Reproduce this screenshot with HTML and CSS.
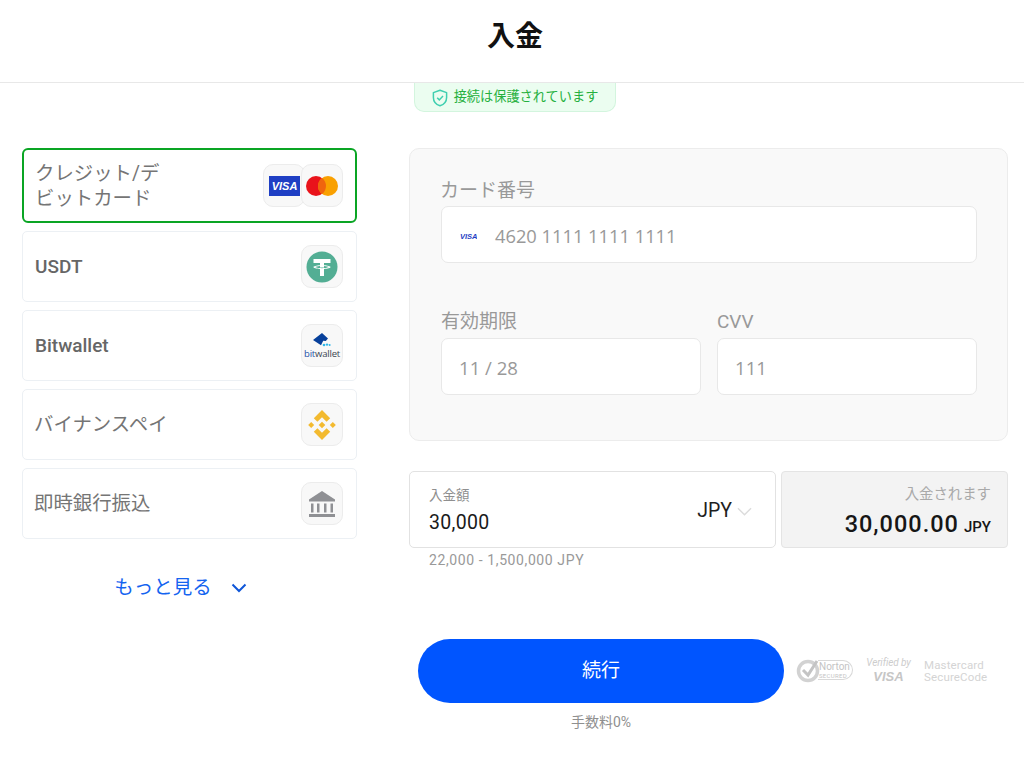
FILE: index.html
```html
<!DOCTYPE html>
<html lang="ja">
<head>
<meta charset="utf-8">
<title>入金</title>
<link rel="stylesheet" href="styles.css">
</head>
<body>
<header class="header"><h1 class="title">入金</h1></header>
<div class="badge-row">
  <div class="badge">
    <svg class="badge-icon" viewBox="0 0 16 18" width="16" height="18"><path d="M8 1.2 14.6 3.6V8.4C14.6 12.4 11.9 15.4 8 16.8 4.1 15.4 1.4 12.4 1.4 8.4V3.6Z" fill="none" stroke="#3fcfb0" stroke-width="1.5" stroke-linejoin="round"/><path d="M5.2 8.8 7.3 10.9 11 7" fill="none" stroke="#3fcfb0" stroke-width="1.5"/></svg>
    <span>接続は保護されています</span>
  </div>
</div>
<main class="main">
  <section class="methods">
    <div class="method method-active">
      <span class="method-name method-wrap">クレジット/デビットカード</span>
      <span class="icons">
        <span class="icon-box icon-overlap">
          <svg viewBox="0 0 31 20" width="31" height="20"><rect width="31" height="20" fill="#1f3fc4"/><text x="15.5" y="14" class="visa-text" text-anchor="middle">VISA</text></svg>
        </span>
        <span class="icon-box">
          <svg viewBox="0 0 32 20" width="32" height="20"><circle cx="10" cy="10" r="10" fill="#e9131b"/><circle cx="22" cy="10" r="10" fill="#f9a000"/><path d="M16 2A10 10 0 0 1 16 18A10 10 0 0 1 16 2Z" fill="#f0640e"/></svg>
        </span>
      </span>
    </div>
    <div class="method">
      <span class="method-name method-bold">USDT</span>
      <span class="icon-box">
        <svg viewBox="0 0 32 32" width="32" height="32"><circle cx="16" cy="16" r="15.5" fill="#53ae94"/><path d="M7.5 8H24.5V12H18V14.2C21.6 14.4 24.6 15.2 24.6 16.1S21.6 17.8 18 18V25H14V18C10.4 17.8 7.4 17 7.4 16.1S10.4 14.4 14 14.2V12H7.5ZM14 15.1C11.5 15.3 9.5 15.7 9.5 16.1 9.5 16.7 12.4 17.2 16 17.2S22.5 16.7 22.5 16.1C22.5 15.7 20.5 15.3 18 15.1V16.5H14Z" fill="#fff"/></svg>
      </span>
    </div>
    <div class="method">
      <span class="method-name method-bold">Bitwallet</span>
      <span class="icon-box icon-bitwallet">
        <svg viewBox="0 0 18 15" width="18" height="15"><path d="M9 0 15 5.500 12.800 8 10.200 7.800 8 12.300 0 7Z" fill="#07409b"/><circle cx="11" cy="12" r="1.300" fill="#2fb6e8"/><circle cx="14" cy="11.600" r="1.200" fill="#2fb6e8"/><circle cx="16.600" cy="12" r="1" fill="#2fb6e8"/></svg>
        <span class="bw-word"><span class="bw-blue">bit</span>wallet</span>
      </span>
    </div>
    <div class="method">
      <span class="method-name">バイナンスペイ</span>
      <span class="icon-box">
        <svg viewBox="0 0 32 32" width="32" height="32" fill="#f3ba2f"><path d="M16 1 24.2 9.2 20.6 12.8 16 8.2 11.4 12.8 7.8 9.2Z"/><path d="M16 31 24.2 22.8 20.6 19.2 16 23.8 11.4 19.2 7.8 22.8Z"/><path d="M5.2 13 8.2 16 5.2 19 2.2 16Z"/><path d="M26.8 13 29.8 16 26.8 19 23.800 16Z"/><path d="M16 12.700 19.300 16 16 19.300 12.700 16Z"/></svg>
      </span>
    </div>
    <div class="method">
      <span class="method-name">即時銀行振込</span>
      <span class="icon-box">
        <svg viewBox="0 0 28 28" width="28" height="28" fill="#8f9094"><path d="M14 1 27 9.500V11.500H1V9.500Z"/><rect x="3" y="13.500" width="2.500" height="9"/><rect x="9" y="13.500" width="2.500" height="9"/><rect x="16" y="13.500" width="2.500" height="9"/><rect x="22.500" y="13.500" width="2.500" height="9"/><rect x="1" y="24" width="26" height="3"/></svg>
      </span>
    </div>
    <div class="more">
      <span>もっと見る</span>
      <svg viewBox="0 0 16 10" width="16" height="10"><path d="M1.500 1.500 8 8 14.500 1.500" fill="none" stroke="#0f56d8" stroke-width="2"/></svg>
    </div>
  </section>
  <section class="pay">
    <div class="card-panel">
      <label class="field-label field-label-top">カード番号</label>
      <div class="input input-card">
        <svg class="mini-visa" viewBox="0 0 17 7" width="17" height="7"><text x="0" y="6.500" class="mini-visa-text">VISA</text></svg>
        <span class="input-value">4620 1111 1111 1111</span>
      </div>
      <div class="card-row">
        <div class="card-col">
          <label class="field-label">有効期限</label>
          <div class="input"><span class="input-value input-value-sm">11 / 28</span></div>
        </div>
        <div class="card-col">
          <label class="field-label">CVV</label>
          <div class="input"><span class="input-value input-value-sm">111</span></div>
        </div>
      </div>
    </div>
    <div class="amount-row">
      <div class="amount-box">
        <div class="amount-left">
          <span class="amount-label">入金額</span>
          <span class="amount-value">30,000</span>
        </div>
        <div class="currency">
          <span>JPY</span>
          <svg viewBox="0 0 16 9" width="15" height="9"><path d="M1 1 8 8 15 1" fill="none" stroke="#dcdcdc" stroke-width="1.500"/></svg>
        </div>
      </div>
      <div class="receive-box">
        <span class="receive-label">入金されます</span>
        <span class="receive-value">30,000.00<small class="receive-cur">JPY</small></span>
      </div>
    </div>
    <div class="hint">22,000 - 1,500,000 JPY</div>
    <div class="action-row">
      <div class="action-col">
        <button class="submit" type="button">続行</button>
        <div class="fee">手数料0%</div>
      </div>
      <div class="logos">
        <div class="norton">
          <svg viewBox="0 0 26 26" width="26" height="26"><circle cx="12" cy="14" r="9.500" fill="none" stroke="#d2d2d2" stroke-width="3.500"/><path d="M7 13 12 18 21 4" fill="none" stroke="#c4c4c4" stroke-width="3"/></svg>
          <span class="norton-text"><b class="norton-name">Norton</b><i class="norton-sub">SECURED</i></span>
        </div>
        <div class="vbv"><i class="vbv-top">Verified by</i><b class="vbv-visa">VISA</b></div>
        <div class="msc">Mastercard<br>SecureCode</div>
      </div>
    </div>
  </section>
</main>
</body>
</html>
```

FILE: styles.css
```css
* { box-sizing: border-box; }
html, body { margin: 0; padding: 0; }
body {
  width: 1024px;
  height: 776px;
  overflow: hidden;
  background: #fff;
  font-family: Roboto, "Noto Sans CJK JP", sans-serif;
  color: #111;
}
.header {
  height: 83px;
  border-bottom: 1px solid #e8e8e8;
  display: flex;
  justify-content: center;
  padding-top: 19px;
}
.title {
  margin: 0;
  font-size: 28px;
  line-height: 36px;
  font-weight: 700;
  color: #111;
  margin-left: 6px;
}
.badge-row {
  display: flex;
  justify-content: center;
  padding-left: 6px;
}
.badge {
  width: 202px;
  height: 29px;
  display: flex;
  align-items: center;
  justify-content: center;
  gap: 6px;
  background: #ebfdf0;
  border: 1px solid #d3f5de;
  border-top: 0;
  border-radius: 0 0 10px 10px;
  color: #25b03e;
  font-size: 13.2px;
  padding-bottom: 3px;
}
.badge-icon { flex: none; margin-top: 4px; }
.main {
  display: flex;
  align-items: flex-start;
  gap: 52px;
  padding: 36px 16px 0 22px;
}
.methods {
  width: 335px;
  display: flex;
  flex-direction: column;
  gap: 8px;
}
.method {
  height: 71px;
  display: flex;
  align-items: center;
  justify-content: space-between;
  padding: 0 13px 0 12px;
  background: #fff;
  border: 1px solid #ecf0f4;
  border-radius: 5px;
}
.method-active {
  height: 75px;
  border: 2px solid #0aa524;
  border-radius: 6px;
  padding: 0 12px 0 12px;
}
.method-name {
  font-size: 19.4px;
  line-height: 25px;
  color: #757575;
  margin-left: -1px;
}
.method-wrap { width: 130px; }
.method-bold { font-weight: 500; font-size: 19px; color: #666; margin-left: 0; }
.icons { display: flex; }
.icon-box {
  flex: none;
  width: 42px;
  height: 43px;
  display: flex;
  flex-direction: column;
  align-items: center;
  justify-content: center;
  background: #f8f8f8;
  border: 1px solid #ececec;
  border-radius: 10px;
}
.icon-overlap { margin-right: -4px; }
.visa-text {
  font: italic 700 11px "Liberation Sans", sans-serif;
  fill: #fff;
}
.icon-bitwallet { gap: 1px; }
.bw-word {
  font: 500 9.5px/10px "Open Sans", sans-serif;
  color: #3a4550;
  letter-spacing: -.2px;
}
.bw-blue { color: #1e50a8; }
.more {
  display: flex;
  justify-content: center;
  align-items: center;
  gap: 19px;
  margin-top: 17px;
  height: 48px;
  padding-right: 18px;
  color: #1464f0;
  font-size: 19.5px;
  line-height: 48px;
}
.pay {
  width: 599px;
  display: flex;
  flex-direction: column;
}
.card-panel {
  height: 293px;
  background: #f9f9f9;
  border: 1px solid #ececec;
  border-radius: 10px;
  padding: 30px 30px 0 31px;
}
.field-label {
  display: block;
  font-size: 19px;
  line-height: 24px;
  color: #999;
  margin: 0 0 4px;
}
.field-label-top { margin: 0 0 3px -1px; }
.input {
  height: 57px;
  display: flex;
  align-items: center;
  background: #fff;
  border: 1px solid #e8e8e8;
  border-radius: 7px;
  padding: 2px 18px 0;
}
.input-card { gap: 18px; }
.input-value {
  font-family: "Open Sans", sans-serif;
  font-size: 18.3px;
  color: #999;
}
.input-value-sm { font-size: 18.6px; margin-left: -1px; }
.mini-visa { flex: none; }
.mini-visa-text {
  font: italic 700 7.500px "Liberation Sans", sans-serif;
  fill: #1f3fc4;
}
.card-row {
  display: flex;
  gap: 16px;
  margin-top: 47px;
}
.card-col { flex: 1 1 0; }
.amount-row {
  display: flex;
  gap: 5px;
  margin-top: 30px;
}
.amount-box {
  width: 367px;
  height: 77px;
  display: flex;
  justify-content: space-between;
  align-items: center;
  border: 1px solid #e2e2e2;
  border-radius: 5px;
  padding: 1px 23px 0 19px;
}
.amount-left { display: flex; flex-direction: column; }
.amount-label { font-size: 13.500px; line-height: 20px; color: #8f8f8f; margin-bottom: 5px; }
.amount-value { font-size: 19.500px; line-height: 26px; color: #1a1a1a; letter-spacing: .3px; }
.currency {
  display: flex;
  align-items: center;
  gap: 5px;
  font-size: 19.500px;
  color: #1f1f1f;
}
.currency svg { margin-top: 3px; }
.receive-box {
  flex: 1;
  height: 77px;
  display: flex;
  flex-direction: column;
  align-items: flex-end;
  justify-content: center;
  background: #f3f3f3;
  border: 1px solid #e4e4e4;
  border-radius: 4px;
  padding: 8px 16px 0;
}
.receive-label { font-size: 14.4px; line-height: 20px; color: #a9a9a9; margin-bottom: 4px; }
.receive-value { font-size: 23.500px; line-height: 30px; font-weight: 500; color: #161616; letter-spacing: 1px; }
.receive-cur { font-size: 15px; font-weight: 500; margin-left: 5px; letter-spacing: 0; }
.hint {
  margin-top: 3px;
  padding-left: 20px;
  font-size: 14px;
  line-height: 18px;
  letter-spacing: .6px;
  color: #999;
}
.action-row {
  display: flex;
  align-items: flex-start;
  gap: 12px;
  margin-top: 70px;
  padding-left: 9px;
}
.action-col { width: 366px; display: flex; flex-direction: column; align-items: center; }
.submit {
  width: 366px;
  height: 64px;
  border: 0;
  border-radius: 32px;
  background: #0055ff;
  color: #fff;
  padding: 0 0 6px;
  font: 400 19px Roboto, "Noto Sans CJK JP", sans-serif;
}
.fee {
  margin-top: 9px;
  font-size: 14px;
  line-height: 20px;
  color: #8f8f8f;
}
.logos {
  display: flex;
  align-items: center;
  gap: 13px;
  height: 62px;
  color: #d0d0d0;
}
.norton {
  display: flex;
  align-items: center;
}
.norton-text {
  display: flex;
  flex-direction: column;
  align-items: flex-start;
  height: 20px;
  width: 35px;
  justify-content: center;
  margin-left: -4px;
  padding-left: 1px;
  border: 1px solid #d8d8d8;
  border-left: 0;
  border-radius: 0 10px 10px 0;
}
.norton-name { font: 400 10px/10px Roboto, sans-serif; color: #c4c4c4; }
.norton-sub { font: 400 6px/7px Roboto, sans-serif; color: #c4c4c4; letter-spacing: .3px; }
.vbv { display: flex; flex-direction: column; align-items: center; width: 45px; }
.vbv-top { font: italic 400 10px/12px Roboto, sans-serif; color: #cdcdcd; letter-spacing: -.1px; white-space: nowrap; }
.vbv-visa { font: italic 700 13px/15px "Liberation Sans", sans-serif; color: #c6c6c6; }
.msc { font: 400 11.5px/12px Roboto, sans-serif; color: #d4d4d4; letter-spacing: .15px; white-space: nowrap; margin-top: 2px; }
```
